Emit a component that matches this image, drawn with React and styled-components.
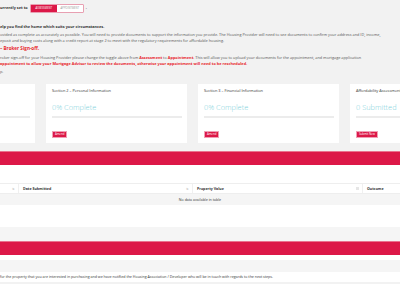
import React from "react";
import styled, { createGlobalStyle } from "styled-components";

const GlobalStyle = createGlobalStyle`
  html, body {
    margin: 0;
    padding: 0;
    background: #f2f2f2;
    font-family: "Open Sans", "Liberation Sans", sans-serif;
    overflow: hidden;
  }
`;

const Page = styled.div`
  width: 400px;
  height: 284px;
  overflow: hidden;
  color: #444;
  background: #f2f2f2;
`;

const Intro = styled.div`
  padding-top: 4px;
  font-size: 3.85px;
  line-height: 6px;
  white-space: nowrap;
`;

const StatusLine = styled.div`
  display: flex;
  align-items: center;
  gap: 2px;
  height: 8px;
  font-weight: 700;
  color: #333;
`;

const Toggle = styled.div`
  display: flex;
  border: 1px solid #e8a0b2;
  border-radius: 1px;
  height: 7px;
`;

const ToggleOpt = styled.span`
  width: 26px;
  display: flex;
  align-items: center;
  justify-content: center;
  font-size: 2.9px;
  font-weight: 400;
  font-style: italic;
  background: ${(p) => (p.$on ? "#dc1848" : "#fff")};
  color: ${(p) => (p.$on ? "#fff" : "#999")};
`;

const Lead = styled.p`
  margin: 12px 0 2px;
  font-weight: 700;
  color: #333;
`;

const Para = styled.p`
  margin: 0;
  color: #555;
`;

const Heading = styled.p`
  margin: 1px 0 3px;
  font-size: 4.6px;
  line-height: 7px;
  font-weight: 700;
  color: #e8262c;
`;

const Red = styled.span`
  color: #e8262c;
  font-weight: ${(p) => (p.$bold ? 700 : 400)};
`;

const Cards = styled.div`
  display: flex;
  gap: 11px;
  margin: 9px 0 0 -106px;
`;

const Card = styled.div`
  flex: 0 0 141px;
  height: 59px;
  background: #fff;
  box-sizing: border-box;
  padding: 5px 5px 0 6px;
`;

const CardTitle = styled.div`
  height: 4px;
  font-size: 3.9px;
  line-height: 4px;
  color: #333;
  white-space: nowrap;
`;

const Big = styled.div`
  margin-top: 10px;
  height: 9px;
  font-size: 7.4px;
  line-height: 9px;
  font-weight: 300;
  color: #7fd2dc;
  white-space: nowrap;
`;

const Bar = styled.div`
  margin-top: 4px;
  height: 2px;
  background: #ececec;
`;

const SmallBtn = styled.span`
  display: inline-block;
  margin-top: 6px;
  padding: 0 2px;
  height: 5px;
  line-height: 5px;
  font-size: 2.8px;
  background: #dc1848;
  border: 0.5px solid #f0a0b5;
  color: #fff;
`;

const PanelHead = styled.div`
  height: 13px;
  background: #dc1848;
  border-top: 1px solid #e9738f;
`;

const PanelBody = styled.div`
  background: #fff;
  padding-top: 18px;
  height: 62px;
  box-sizing: border-box;
`;

const Table = styled.div`
  font-size: 3.6px;
  color: #333;
`;

const HeadRow = styled.div`
  display: grid;
  grid-template-columns: 19px 174px 170px 1fr;
  height: 11px;
  border-top: 1px solid #eee;
  border-bottom: 1px solid #eee;
  box-sizing: border-box;
`;

const Th = styled.div`
  display: flex;
  align-items: center;
  justify-content: space-between;
  padding: 0 3px 0 4px;
  font-weight: 700;
  border-right: ${(p) => (p.$last ? "none" : "1px solid #f0f0f0")};
`;

const Sort = styled.span`
  color: #ccc;
  font-size: 3px;
`;

const SortBox = styled.span`
  width: 3px;
  height: 3px;
  background: #e6e6e6;
`;

const EmptyRow = styled.div`
  height: 11px;
  line-height: 11px;
  text-align: center;
  background: #f5f5f5;
  font-size: 3.6px;
  color: #333;
`;

const Band = styled.div`
  height: ${(p) => p.$h}px;
  background: ${(p) => p.$bg};
`;

const Note = styled.div`
  height: 10px;
  line-height: 10px;
  font-size: 3.6px;
  color: #333;
  background: #fff;
  white-space: nowrap;
`;

const cards = [
  { title: "Section 2 – Personal Information", big: "0% Complete", btn: "Amend" },
  { title: "Section 3 – Financial Information", big: "0% Complete", btn: "Amend" },
  { title: "Affordability Assessment", big: "0 Submitted", btn: "Submit New" },
];

export default function App() {
  return (
    <Page>
      <GlobalStyle />
      <Intro>
        <StatusLine>
          urrently set to
          <Toggle>
            <ToggleOpt $on>ASSESSMENT</ToggleOpt>
            <ToggleOpt>APPOINTMENT</ToggleOpt>
          </Toggle>
          .
        </StatusLine>
        <Lead>elp you find the home which suits your circumstances.</Lead>
        <Para>
          ovided as complete as accurately as possible. You will need to provide documents to support the information you provide. The Housing Provider will need to see documents to confirm your address and ID, income,
        </Para>
        <Para>
          eposit and buying costs along with a credit report at stage 2 to meet with the regulatory requirements for affordable housing.
        </Para>
        <Heading>– Broker Sign-off.</Heading>
        <Para>
          roker sign-off for your Housing Provider please change the toggle above from <Red $bold>Assessment</Red> to <Red $bold>Appointment</Red>. This will allow you to upload your documents for the appointment, and mortgage application
        </Para>
        <Para>
          <Red $bold>appointment to allow your Mortgage Advisor to review the documents, otherwise your appointment will need to be rescheduled.</Red>
        </Para>
        <Para style={{ marginTop: 2 }}>p.</Para>
      </Intro>

      <Cards>
        <Card>
          <CardTitle />
          <Big />
          <Bar />
        </Card>
        {cards.map((c) => (
          <Card key={c.title}>
            <CardTitle>{c.title}</CardTitle>
            <Big>{c.big}</Big>
            <Bar />
            <SmallBtn>{c.btn}</SmallBtn>
          </Card>
        ))}
      </Cards>

      <Band $h={8} $bg="#f2f2f2" />
      <PanelHead />
      <PanelBody>
        <Table>
          <HeadRow>
            <Th>
              <span />
              <Sort>⇅</Sort>
            </Th>
            <Th>
              Date Submitted
              <Sort>⇅</Sort>
            </Th>
            <Th>
              Property Value
              <SortBox />
            </Th>
            <Th $last>Outcome</Th>
          </HeadRow>
          <EmptyRow>No data available in table</EmptyRow>
        </Table>
      </PanelBody>
      <Band $h={14} $bg="#f5f5f5" />
      <PanelHead />
      <Band $h={5} $bg="#fff" />
      <Band $h={12} $bg="#f5f5f5" />
      <Note>
        for the property that you are interested in purchasing and we have notified the Housing Association / Developer who will be in touch with regards to the next steps.
      </Note>
    </Page>
  );
}
